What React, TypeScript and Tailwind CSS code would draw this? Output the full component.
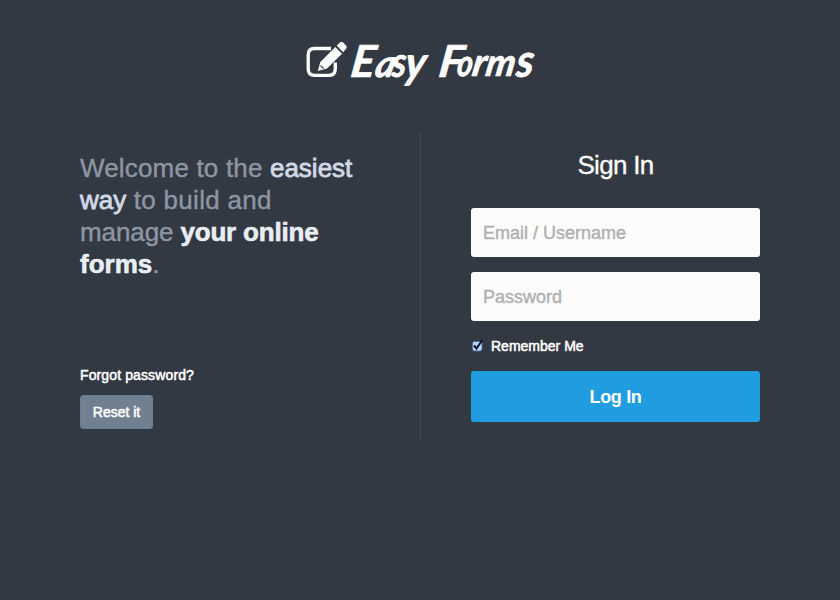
const letters = [
  { c: 'E', x: 349.5, y: 76.5, s: 44, w: 1.02, r: 0, k: -8 },
  { c: 'a', x: 373.5, y: 76.5, s: 38, w: 0.98, r: 0, k: -14 },
  { c: 's', x: 391.5, y: 77, s: 41, w: 0.86, r: -3, k: -6 },
  { c: 'y', x: 403.5, y: 78, s: 44, w: 0.96, r: 0, k: -8 },
  { c: 'F', x: 437.5, y: 76.5, s: 44, w: 1.04, r: 0, k: -8 },
  { c: 'o', x: 456, y: 76, s: 37, w: 0.8, r: 0, k: -8 },
  { c: 'r', x: 471, y: 76, s: 39, w: 1, r: 0, k: -10 },
  { c: 'm', x: 484.500, y: 76, s: 38, w: 0.97, r: 0, k: -10 },
  { c: 's', x: 515.500, y: 77, s: 45, w: 0.96, r: -3, k: -8 },
];

function Logo() {
  return (
    <svg className="block h-[132px] w-full" viewBox="0 0 840 132" fill="#fff" role="img" aria-label="Easy Forms">
      <path
        d="M331 48.500H314.500Q308.200 48.500 308.200 54.800V69Q308.200 75.300 314.500 75.300H329Q335.300 75.300 335.300 69V62.500"
        fill="none"
        stroke="#fff"
        strokeWidth="3.3"
      />
      <path d="M317.800 71L320.300 62L335.300 47L342 53.700L327 68.500Z" />
      <path d="M336.700 45.600L340.300 42.300Q341.700 41.300 343 42.500L346.300 45.800Q347.200 47.200 346.200 48.500L343.200 52.200Z" />
      <path d="M320.500 65.500L323.700 68.700" stroke="#323942" strokeWidth="1.1" />
      <g
        fontFamily="Lato, 'Liberation Sans', sans-serif"
        fontWeight="700"
        fontStyle="italic"
        stroke="#fff"
        strokeWidth="0.7"
        strokeLinejoin="round"
      >
        {letters.map((l, i) => (
          <text key={i} fontSize={l.s} transform={`translate(${l.x} ${l.y}) rotate(${l.r}) skewX(${l.k}) scale(${l.w} 1)`}>
            {l.c}
          </text>
        ))}
      </g>
    </svg>
  );
}

export default function App() {
  return (
    <div className="h-[600px] w-[840px] overflow-hidden bg-[#323942] font-['Liberation_Sans',Arial,sans-serif] text-white">
      <Logo />
      <main className="flex h-[309px] px-20">
        <section className="w-[341px] border-r border-[#414d56] pt-5">
          <h2 className="h-[128px] whitespace-nowrap text-[26px] leading-8 text-[#8d96a2] [-webkit-text-stroke:0.4px]">
            <span className="tracking-[0.17px]">Welcome to the </span>
            <span className="text-[#d0d9e5] [-webkit-text-stroke:0.8px]">easiest</span>
            <br />
            <span className="text-[#d0d9e5] [-webkit-text-stroke:0.8px]">way</span>
            <span className="tracking-[0.3px]"> to build and</span>
            <br />
            <span className="tracking-[-0.1px]">manage </span>
            <strong className="tracking-[-0.2px] text-[#e9eef5] [-webkit-text-stroke:0.6px]">your online</strong>
            <br />
            <strong className="text-[#e9eef5] [-webkit-text-stroke:0.6px]">forms</strong>.
          </h2>
          <p className="mt-[85px] text-sm leading-5 tracking-[0.12px] [-webkit-text-stroke:0.5px]">Forgot password?</p>
          <button className="mt-[10px] block h-[34px] w-[73px] rounded-[3px] border border-[#6a7f93] bg-[#708090] text-sm [-webkit-text-stroke:0.5px]">
            Reset it
          </button>
        </section>
        <form className="ml-[50px] w-[289px] pt-[17px]" onSubmit={(e) => e.preventDefault()}>
          <h1 className="text-center text-[26px] leading-8 tracking-[-0.7px] [-webkit-text-stroke:0.3px]">Sign In</h1>
          <input
            className="mt-[27px] block h-[49px] w-full rounded-[3px] bg-[#fcfcfc] px-3 pt-0.5 text-lg text-[#555] placeholder:text-[#b0b0b0] placeholder:[-webkit-text-stroke:0.4px]"
            placeholder="Email / Username"
          />
          <input
            type="password"
            className="mt-[15px] block h-[49px] w-full rounded-[3px] bg-[#fcfcfc] px-3 pt-0.5 text-lg text-[#555] placeholder:text-[#b0b0b0] placeholder:[-webkit-text-stroke:0.4px]"
            placeholder="Password"
          />
          <label className="mt-[15px] flex h-5 items-center">
            <svg className="mr-[5px] size-[15px]" viewBox="0 0 15 15">
              <rect x="1.500" y="2.500" width="9.500" height="9.500" rx="2" fill="#b4d8fb" stroke="#5264a0" strokeWidth="0.8" />
              <path d="M3 6.500L5.500 9.500L11.300 1" fill="none" stroke="#071432" strokeWidth="2" />
            </svg>
            <span className="text-sm [-webkit-text-stroke:0.5px]">Remember Me</span>
          </label>
          <button className="mt-[15px] block h-[51px] w-full rounded-[3px] bg-[#229ce1] text-lg font-bold tracking-[-0.35px]">
            Log In
          </button>
        </form>
      </main>
    </div>
  );
}
